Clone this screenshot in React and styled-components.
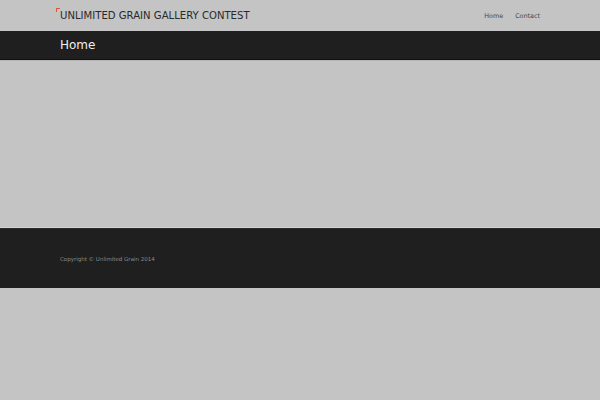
import React from "react";
import styled, { createGlobalStyle } from "styled-components";

const Global = createGlobalStyle`
  html, body { margin: 0; padding: 0; background: #c4c4c4; }
  body { font-family: "DejaVu Sans", Verdana, sans-serif; }
`;

const Header = styled.header`
  height: 31px;
  display: flex;
  align-items: center;
  justify-content: space-between;
  padding: 0 60px 0 56px;
`;

const Brand = styled.div`
  position: relative;
  padding-left: 4px;
  font-size: 10.1px;
  color: #2a2a2a;
  &::before {
    content: "";
    position: absolute;
    left: 0;
    top: -2px;
    width: 3px;
    height: 3px;
    border-top: 1px solid #e0573f;
    border-left: 1px solid #e0573f;
  }
`;

const Nav = styled.nav`
  display: flex;
  gap: 12px;
`;

const NavLink = styled.a`
  font-size: 6.4px;
  color: #444;
  text-decoration: none;
`;

const TitleBar = styled.div`
  background: #1f1f1f;
  height: 28px;
  border-bottom: 1px solid #111;
  display: flex;
  align-items: center;
  padding-left: 60px;
`;

const Title = styled.h1`
  margin: 0;
  font-weight: normal;
  font-size: 12px;
  color: #eee;
`;

const Main = styled.main`
  height: 166px;
  border-top: 1px solid #b5b5b5;
  border-bottom: 1px solid #d2d2d2;
`;

const Footer = styled.footer`
  background: #1f1f1f;
  height: 60px;
  display: flex;
  align-items: center;
  padding-left: 60px;
  box-sizing: border-box;
  border-top: 1px solid #2c2c2c;
`;

const Copy = styled.p`
  margin: 0;
  font-size: 5.5px;
  color: #8a8a8a;
`;

export default function App() {
  return (
    <>
      <Global />
      <Header>
        <Brand>UNLIMITED GRAIN GALLERY CONTEST</Brand>
        <Nav>
          <NavLink href="#">Home</NavLink>
          <NavLink href="#">Contact</NavLink>
        </Nav>
      </Header>
      <TitleBar>
        <Title>Home</Title>
      </TitleBar>
      <Main />
      <Footer>
        <Copy>Copyright © Unlimited Grain 2014</Copy>
      </Footer>
    </>
  );
}
